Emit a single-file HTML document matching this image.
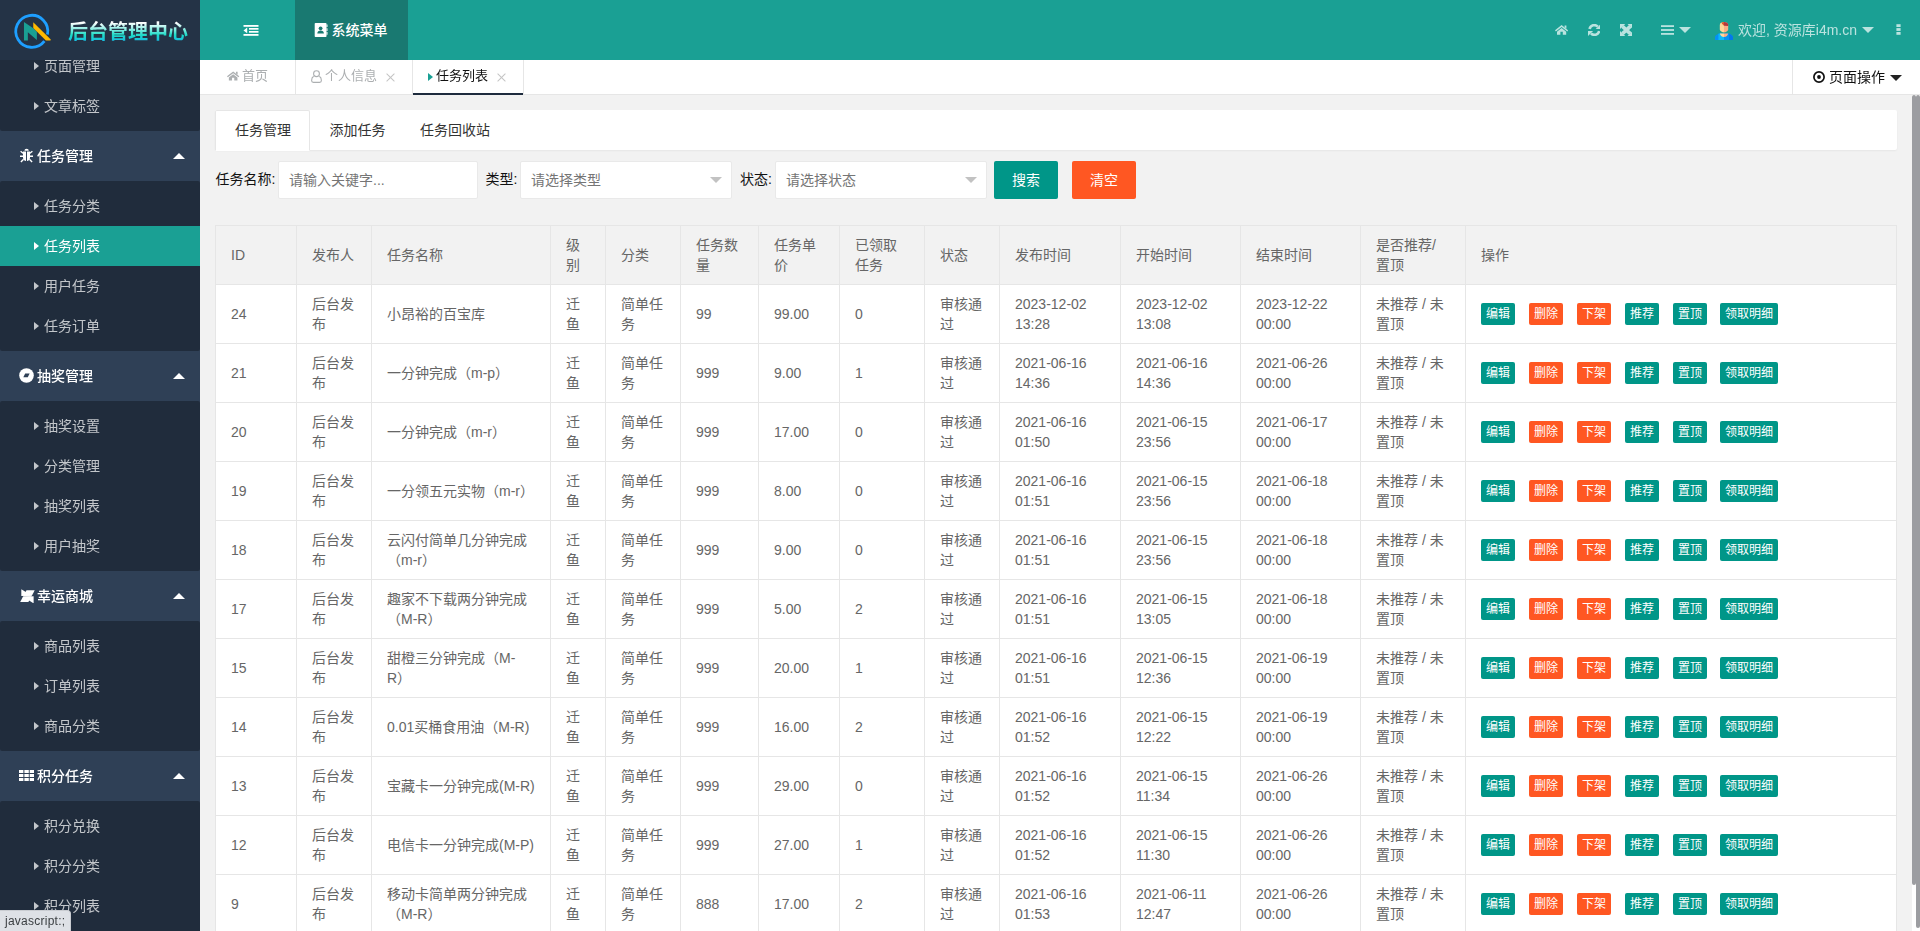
<!DOCTYPE html>
<html lang="zh-CN">
<head>
<meta charset="utf-8">
<title>后台管理中心</title>
<style>
*{box-sizing:border-box;margin:0;padding:0}
html,body{width:1920px;height:931px;overflow:hidden;background:#f2f2f2}
body{font-family:"Liberation Sans","Noto Sans CJK SC",sans-serif;font-size:14px;color:#333;position:relative;line-height:24px}
a{text-decoration:none;color:inherit}
ul{list-style:none}
svg{display:block}
.abs{position:absolute}

/* ---------- sidebar ---------- */
#side{will-change:transform;position:absolute;left:0;top:0;width:200px;height:931px;background:#2f4056;overflow:hidden}
#menu{position:absolute;left:0;top:46px;width:200px}
#menu .child{background:rgba(0,0,0,.3);padding:5px 0;border-radius:2px}
#menu .child li{height:40px;line-height:40px;color:rgba(255,255,255,.73);font-size:14px;position:relative;white-space:nowrap}
#menu .child li .tri{position:absolute;left:34.2px;top:15.7px;width:0;height:0;border-left:5.7px solid rgba(255,255,255,.73);border-top:4.25px solid transparent;border-bottom:4.25px solid transparent}
#menu .child li span.t{position:absolute;left:44px;top:0}
#menu .child li.this{background:#1aa094;color:#fff}
#menu .child li.this .tri{border-left-color:#fff}
#menu .parent{height:50px;line-height:50px;color:#fff;position:relative;font-size:14px;white-space:nowrap}
#menu .parent .t{position:absolute;left:37px;top:0;font-weight:500}
#menu .parent .ico{position:absolute;left:20px;top:18px;width:13px;height:14px}
#menu .parent .up{position:absolute;left:173px;top:22px;width:0;height:0;border-left:6px solid transparent;border-right:6px solid transparent;border-bottom:6px solid #fff}
#logo{position:absolute;left:0;top:0;width:200px;height:60px;background:#243346;z-index:5}
#logo h1{position:absolute;left:68px;top:20px;height:24px;line-height:24px;font-size:20px;font-weight:700;white-space:nowrap;background:linear-gradient(180deg,#ffffff 12%,#1edcc8 62%,#16b6e4 92%);-webkit-background-clip:text;background-clip:text;color:transparent}
#status{position:absolute;left:0;top:910px;width:71px;height:21px;background:#dee1e6;border-top-right-radius:4px;z-index:9;font-size:12px;line-height:21px;color:#3c4043;padding-left:5px;letter-spacing:.25px;border-top:1px solid #c9ccd1;border-right:1px solid #c9ccd1}

/* ---------- header ---------- */
#header{position:absolute;left:200px;top:0;width:1720px;height:60px;background:#1aa094}
#header .sysmenu{position:absolute;left:95px;top:0;width:113px;height:60px;background:#197971;color:#fff;line-height:60px;font-size:14px;white-space:nowrap}
#header .sysmenu span{position:absolute;left:36.4px;top:0;font-weight:500}
#header .r{will-change:transform;position:absolute;top:0;color:rgba(255,255,255,.7);line-height:60px;white-space:nowrap;font-size:14px}

/* ---------- tab bar ---------- */
#tabs{will-change:transform;position:absolute;left:200px;top:60px;width:1720px;height:35px;background:#fff;border-bottom:1px solid #e6e6e6}
#tabs .tab{position:absolute;top:0;height:34px;line-height:32px;font-size:13px;color:#acafb1;white-space:nowrap;border-right:1px solid #e6e6e6}
#tabs .x{position:absolute;top:13px;width:8px;height:8px}
#tabs .x:before,#tabs .x:after{content:"";position:absolute;left:-1.5px;top:3.5px;width:11px;height:1px;background:#c4c4c4;transform:rotate(45deg)}
#tabs .x:after{transform:rotate(-45deg)}

/* ---------- content ---------- */
#subtab{position:absolute;left:215px;top:110px;width:1682px;height:40px;background:#fff;border-radius:2px;box-shadow:0 1px 2px 0 rgba(0,0,0,.05)}
#subtab .li{position:absolute;top:0;height:40px;line-height:40px;font-size:14px;color:#333;white-space:nowrap}
#subtab .act{position:absolute;left:0;top:0;width:95px;height:41px;border:1px solid #e6e6e6;border-bottom-color:#fff;border-radius:2px 2px 0 0;background:#fff}
.lbl{position:absolute;top:161px;height:38px;line-height:36px;font-size:14px;color:#111;white-space:nowrap}
.inp{position:absolute;top:161px;height:38px;background:#fff;border:1px solid #e9e9e9;border-radius:2px;line-height:36px;font-size:14px;color:#757575;padding-left:10px;white-space:nowrap}
.inp .edge{position:absolute;right:8.8px;top:15px;width:0;height:0;border:6px solid transparent;border-top-color:#c2c2c2}
.btn{position:absolute;top:161px;height:38px;width:64px;line-height:38px;text-align:center;color:#fff;font-size:14px;border-radius:2px;white-space:nowrap}
.g{background:#009688}.o{background:#ff5722}

table{position:absolute;left:215px;top:225px;width:1681px;border-collapse:collapse;table-layout:fixed;background:#fff;color:#666;font-size:14px}
th,td{border:1px solid #e6e6e6;padding:9px 15px;line-height:20px;text-align:left;font-weight:400;vertical-align:middle;height:59px}
th{background:#f2f2f2}
td .b{display:inline-block;vertical-align:middle;height:22px;line-height:22px;padding:0 5px;font-size:12px;color:#fff;border-radius:2px;margin-right:14px;white-space:nowrap}
td.op{white-space:nowrap;font-size:0;padding-top:0;padding-bottom:0}

/* scrollbars */
.sb{position:absolute;top:95px;width:4px;background:#9c9da1;border-radius:2px}
</style>
</head>
<body>
<div id="side"><div id="menu">
<ul class="child" style="padding-top:0;border-radius:0 0 2px 2px"><li><i class="tri"></i><span class="t">页面管理</span></li><li><i class="tri"></i><span class="t">文章标签</span></li></ul>
<div class="parent"><svg class="ico" style="left:20px;top:17px;width:13px;height:15px" viewBox="0 0 13 15"><g fill="#fff"><path d="M4.400 2.800a2.200 2.100 0 0 1 4.400 0z"/><path d="M3 3.500h3V13C4.200 12.800 3 11.200 3 9.200z"/><path d="M7 3.500h3v5.700c0 2-1.200 3.600-3 3.800z"/></g><g stroke="#fff" stroke-width="1.400" fill="none"><path d="M0 8.300h3.200M9.800 8.300H13M.6 3.200l2.900 2.300M12.400 3.200L9.500 5.500M.9 14l2.700-2.800M12.100 14l-2.700-2.800"/></g></svg><span class="t">任务管理</span><i class="up"></i></div>
<ul class="child"><li><i class="tri"></i><span class="t">任务分类</span></li><li class="this"><i class="tri"></i><span class="t">任务列表</span></li><li><i class="tri"></i><span class="t">用户任务</span></li><li><i class="tri"></i><span class="t">任务订单</span></li></ul>
<div class="parent"><svg class="ico" style="left:19.100px;top:17.100px;width:15px;height:15px" viewBox="0 0 15 15"><circle cx="7.500" cy="7.500" r="7.300" fill="#fff"/><path d="M4.300 9.300L6.200 5.500h4.400L8.800 9.300z" fill="#2f4056"/></svg><span class="t">抽奖管理</span><i class="up"></i></div>
<ul class="child"><li><i class="tri"></i><span class="t">抽奖设置</span></li><li><i class="tri"></i><span class="t">分类管理</span></li><li><i class="tri"></i><span class="t">抽奖列表</span></li><li><i class="tri"></i><span class="t">用户抽奖</span></li></ul>
<div class="parent"><svg class="ico" style="left:19.500px;top:17.800px;width:15px;height:14.600px" viewBox="-0.5 -0.2 15 14.6"><g fill="#fff"><path d="M.8 0L11.500 6.500.8 6.900z"/><path d="M6 1h8.200L11.400 6.500 2.900 6.700z"/><path d="M-.3 12.800L2.500 7.400 11 7.100 7.900 12.800z"/><path d="M13.100 14.200L2.400 7.400 13.100 7z"/></g></svg><span class="t">幸运商城</span><i class="up"></i></div>
<ul class="child"><li><i class="tri"></i><span class="t">商品列表</span></li><li><i class="tri"></i><span class="t">订单列表</span></li><li><i class="tri"></i><span class="t">商品分类</span></li></ul>
<div class="parent"><svg class="ico" style="left:19.300px;top:19px;width:15.200px;height:11px" viewBox="0 0 15.200 11"><g fill="#fff"><rect x="0" y="0" width="4.400" height="3"/><rect x="5.400" y="0" width="4.400" height="3"/><rect x="10.700" y="0" width="4.400" height="3"/><rect x="0" y="4" width="4.400" height="3"/><rect x="5.400" y="4" width="4.400" height="3"/><rect x="10.700" y="4" width="4.400" height="3"/><rect x="0" y="8" width="4.400" height="3"/><rect x="5.400" y="8" width="4.400" height="3"/><rect x="10.700" y="8" width="4.400" height="3"/></g></svg><span class="t">积分任务</span><i class="up"></i></div>
<ul class="child"><li><i class="tri"></i><span class="t">积分兑换</span></li><li><i class="tri"></i><span class="t">积分分类</span></li><li><i class="tri"></i><span class="t">积分列表</span></li><li><i class="tri"></i><span class="t">积分订单</span></li></ul>
</div>
<div id="logo"><svg class="abs" style="left:0;top:0;width:60px;height:60px" viewBox="0 0 60 60"><path d="M44.41 41.15A16 16 0 1 1 47.48 34.49" fill="none" stroke="#1e9fff" stroke-width="2.8"/><path d="M23.98 21.92L33.26 28.36l3.61 3.35v8.25L27.85 32.23v8.24h-3.87z" fill="#1aa094"/><path d="M33.26 22.18L50.78 39.55l-.28 .92h-4.61L33.26 28.1z" fill="#ffb800"/></svg><h1>后台管理中心</h1></div>
<div id="status">javascript:;</div>
</div>
<div id="header">
<svg class="abs" style="left:43px;top:25px;width:16px;height:11px" viewBox="0 0 16 11"><g fill="#fff"><rect x="0.500" y="0" width="15" height="1.800"/><rect x="6" y="3" width="9.500" height="1.700"/><rect x="6" y="6" width="9.500" height="1.700"/><rect x="0.500" y="9" width="15" height="1.800"/><path d="M4.200 2.600v5.600L0.500 5.400z"/></g></svg>
<div class="sysmenu"><svg class="abs" style="left:19px;top:23px;width:14px;height:14px" viewBox="0 0 14 14"><path d="M1.500 0h10.200a.8.800 0 0 1 .8.800v12.400a.8.800 0 0 1-.8.800H1.500a.8.800 0 0 1-.8-.8V.8a.8.800 0 0 1 .8-.8z" fill="#fff"/><path d="M12.500 1.500h1v2.600h-1zM12.500 5.300h1v2.600h-1zM12.500 9.100h1v2.600h-1z" fill="#fff"/><circle cx="6.600" cy="5.300" r="1.900" fill="#197971"/><path d="M3.300 10.600c0-2 1.400-3 3.300-3s3.300 1 3.300 3z" fill="#197971"/></svg><span>系统菜单</span></div>
<svg class="abs" style="left:1354.800px;top:25px;width:13.200px;height:9.800px" viewBox="0 0 13.2 9.8"><g fill="#bae3df"><path d="M6.6 0L13.2 5.300l-.9 1.100L6.600 1.900.900 6.400 0 5.300z"/><path d="M9.600.500h1.800v3.200l-1.800-1.500z"/><path d="M6.600 3l4.600 3.700v3.100H7.800v-3H5.400v3H2V6.700z"/></g></svg>
<svg class="abs" style="left:1387.600px;top:24px;width:12.800px;height:12px" viewBox="0 0 12.8 12"><g fill="none" stroke="#bae3df" stroke-width="2.600"><path d="M1.600 5A4.800 4.800 0 0 1 9.800 2.700"/><path d="M11.200 7A4.800 4.800 0 0 1 3 9.300"/></g><g fill="#bae3df"><path d="M12.800 0.100v4.900H7.700z"/><path d="M0 11.900V7h5.100z"/></g></svg>
<svg class="abs" style="left:1419.500px;top:24px;width:12.800px;height:12px" viewBox="0 0 12.800 12"><g fill="#bae3df"><path d="M0 0h5.300L0 4.900zM12.800 0H7.500l5.300 4.900zM0 12h5.300L0 7.100zM12.800 12H7.500l5.300-4.900z"/></g><g stroke="#bae3df" stroke-width="3.600"><path d="M2.500 2.400l7.800 7.200M10.300 2.400L2.500 9.600"/></g></svg>
<svg class="abs" style="left:1461.400px;top:25px;width:13px;height:10px" viewBox="0 0 13 10"><g fill="#bae3df"><rect y="0.200" width="13" height="1.800"/><rect y="4.100" width="13" height="1.800"/><rect y="8" width="13" height="1.800"/></g></svg>
<i class="abs" style="left:1479px;top:27px;border:6px solid transparent;border-top-color:#bae3df;border-bottom:0"></i>
<svg class="abs" style="left:1515px;top:22px;width:18px;height:18px" viewBox="0 0 18 18"><path d="M0 18.200V15.200C.2 13.300 3 11.500 5 11.500H13c2 0 4.800 1.800 5 3.700v3z" fill="#0590f5"/><path d="M3.400 18.200V11.850Q4.200 11.500 5 11.500H9V18.200z" fill="#0ab9fb"/><path d="M9 18.200V11.500h4q.5 0 1.100 .150V18.200z" fill="#0592f0"/><path d="M14 18.200V11.650C15.800 12.200 17.900 13.600 18 15.200v3z" fill="#0478ea"/><path d="M4.900 11.500H9V15C6.800 15 4.900 13.300 4.900 11.500z" fill="#ffd699"/><path d="M13.100 11.500H9V15c2.200 0 4.100-1.700 4.100-3.500z" fill="#ffad85"/><path d="M9 0C6.800 0 4.800 .8 4.800 3V7.600c0 1.300 2.500 2.900 4.200 2.900z" fill="#ffd699"/><path d="M9 0c2.200 0 4.200 .8 4.200 3V7.600c0 1.300-2.500 2.900-4.200 2.900z" fill="#ffad85"/><path d="M6.600 .4Q7.700 0 9 0V3.800L7 1.700z" fill="#e0572a"/><path d="M9 0c2.200 0 4.200 .8 4.200 3V4L9 3.800z" fill="#b5373f"/></svg>
<div class="r" style="left:1537.500px">欢迎, 资源库i4m.cn</div>
<i class="abs" style="left:1662px;top:27px;border:6px solid transparent;border-top-color:#bae3df;border-bottom:0"></i>
<svg class="abs" style="left:1696px;top:24px;width:5px;height:11px" viewBox="0 0 5 11"><g fill="#bae3df"><rect x=".4" y="0.200" width="4.200" height="2.800"/><rect x=".4" y="4.100" width="4.200" height="2.800"/><rect x=".4" y="8" width="4.200" height="2.800"/></g></svg>
</div>
<div id="tabs">
<div class="tab" style="left:0;width:96px"><svg class="abs" style="left:27.400px;top:11.300px;width:12.300px;height:9.900px" viewBox="0 0 13.2 9.8"><g fill="#acafb1"><path d="M6.6 0L13.2 5.300l-.9 1.100L6.600 1.900.900 6.400 0 5.300z"/><path d="M9.600.500h1.800v3.200l-1.800-1.500z"/><path d="M6.600 3l4.600 3.700v3.100H7.800v-3H5.400v3H2V6.700z"/></g></svg><span class="abs" style="left:42px;top:0">首页</span></div>
<div class="tab" style="left:96px;width:117px"><svg class="abs" style="left:15px;top:10px;width:11px;height:13px" viewBox="0 0 11 13"><g fill="none" stroke="#acafb1" stroke-width="1.100"><circle cx="5.500" cy="3.700" r="2.900"/><path d="M2.700 6.300C1.300 7 .6 8.500.6 10.500c0 1.200.7 1.900 1.800 1.900h6.200c1.100 0 1.800-.7 1.800-1.900 0-2-.7-3.500-2.100-4.200"/></g></svg><span class="abs" style="left:29px;top:0">个人信息</span><i class="x" style="left:90px"></i></div>
<div class="tab" style="left:213px;width:110px;color:#111;border-right:0"><i class="abs" style="left:15px;top:12.500px;border-left:5px solid #1aa094;border-top:4px solid transparent;border-bottom:4px solid transparent"></i><span class="abs" style="left:23px;top:0">任务列表</span><i class="x" style="left:84.500px"></i></div>
<div class="abs" style="left:323px;top:0;width:1px;height:34px;background:#e6e6e6"></div>
<div class="abs" style="left:213px;top:33px;width:110px;height:2px;background:#1e2b3d"></div>
<div class="abs" style="left:1592px;top:0;width:1px;height:34px;background:#e6e6e6"></div>
<svg class="abs" style="left:1613px;top:11px;width:12px;height:12px" viewBox="0 0 12 12"><circle cx="6" cy="6" r="5.100" fill="none" stroke="#111" stroke-width="1.700"/><circle cx="6" cy="6" r="1.900" fill="#111"/></svg>
<span class="abs" style="left:1629px;top:0;line-height:34px;font-size:14px;color:#111;white-space:nowrap">页面操作</span>
<i class="abs" style="left:1690px;top:15px;border:6px solid transparent;border-top-color:#222;border-bottom:0"></i>
</div>
<div id="subtab"><div class="act"></div><span class="li" style="left:20px">任务管理</span><span class="li" style="left:114.500px">添加任务</span><span class="li" style="left:205px">任务回收站</span></div>
<span class="lbl" style="left:215.500px">任务名称:</span><div class="inp" style="left:278px;width:199.500px">请输入关键字...</div>
<span class="lbl" style="left:485.500px">类型:</span><div class="inp" style="left:520px;width:212px">请选择类型<i class="edge"></i></div>
<span class="lbl" style="left:740px">状态:</span><div class="inp" style="left:775px;width:212px">请选择状态<i class="edge"></i></div>
<div class="btn g" style="left:994px">搜索</div><div class="btn o" style="left:1072px">清空</div>
<table><colgroup><col style="width:81px"><col style="width:75px"><col style="width:179px"><col style="width:55px"><col style="width:75px"><col style="width:78px"><col style="width:81px"><col style="width:85px"><col style="width:75px"><col style="width:121px"><col style="width:120px"><col style="width:120px"><col style="width:105px"><col style="width:431px"></colgroup>
<thead><tr><th>ID</th><th>发布人</th><th>任务名称</th><th>级别</th><th>分类</th><th>任务数量</th><th>任务单价</th><th>已领取任务</th><th>状态</th><th>发布时间</th><th>开始时间</th><th>结束时间</th><th>是否推荐/<br>置顶</th><th>操作</th></tr></thead><tbody>
<tr><td>24</td><td>后台发布</td><td>小昂裕的百宝库</td><td>迁鱼</td><td>简单任务</td><td>99</td><td>99.00</td><td>0</td><td>审核通过</td><td>2023-12-02<br>13:28</td><td>2023-12-02<br>13:08</td><td>2023-12-22<br>00:00</td><td>未推荐 / 未置顶</td><td class="op"><span class="b g">编辑</span><span class="b o">删除</span><span class="b o">下架</span><span class="b g">推荐</span><span class="b g">置顶</span><span class="b g" style="margin-right:0;margin-left:-1px">领取明细</span></td></tr>
<tr><td>21</td><td>后台发布</td><td>一分钟完成（m-p）</td><td>迁鱼</td><td>简单任务</td><td>999</td><td>9.00</td><td>1</td><td>审核通过</td><td>2021-06-16<br>14:36</td><td>2021-06-16<br>14:36</td><td>2021-06-26<br>00:00</td><td>未推荐 / 未置顶</td><td class="op"><span class="b g">编辑</span><span class="b o">删除</span><span class="b o">下架</span><span class="b g">推荐</span><span class="b g">置顶</span><span class="b g" style="margin-right:0;margin-left:-1px">领取明细</span></td></tr>
<tr><td>20</td><td>后台发布</td><td>一分钟完成（m-r）</td><td>迁鱼</td><td>简单任务</td><td>999</td><td>17.00</td><td>0</td><td>审核通过</td><td>2021-06-16<br>01:50</td><td>2021-06-15<br>23:56</td><td>2021-06-17<br>00:00</td><td>未推荐 / 未置顶</td><td class="op"><span class="b g">编辑</span><span class="b o">删除</span><span class="b o">下架</span><span class="b g">推荐</span><span class="b g">置顶</span><span class="b g" style="margin-right:0;margin-left:-1px">领取明细</span></td></tr>
<tr><td>19</td><td>后台发布</td><td>一分领五元实物（m-r）</td><td>迁鱼</td><td>简单任务</td><td>999</td><td>8.00</td><td>0</td><td>审核通过</td><td>2021-06-16<br>01:51</td><td>2021-06-15<br>23:56</td><td>2021-06-18<br>00:00</td><td>未推荐 / 未置顶</td><td class="op"><span class="b g">编辑</span><span class="b o">删除</span><span class="b o">下架</span><span class="b g">推荐</span><span class="b g">置顶</span><span class="b g" style="margin-right:0;margin-left:-1px">领取明细</span></td></tr>
<tr><td>18</td><td>后台发布</td><td>云闪付简单几分钟完成（m-r）</td><td>迁鱼</td><td>简单任务</td><td>999</td><td>9.00</td><td>0</td><td>审核通过</td><td>2021-06-16<br>01:51</td><td>2021-06-15<br>23:56</td><td>2021-06-18<br>00:00</td><td>未推荐 / 未置顶</td><td class="op"><span class="b g">编辑</span><span class="b o">删除</span><span class="b o">下架</span><span class="b g">推荐</span><span class="b g">置顶</span><span class="b g" style="margin-right:0;margin-left:-1px">领取明细</span></td></tr>
<tr><td>17</td><td>后台发布</td><td>趣家不下载两分钟完成（M-R）</td><td>迁鱼</td><td>简单任务</td><td>999</td><td>5.00</td><td>2</td><td>审核通过</td><td>2021-06-16<br>01:51</td><td>2021-06-15<br>13:05</td><td>2021-06-18<br>00:00</td><td>未推荐 / 未置顶</td><td class="op"><span class="b g">编辑</span><span class="b o">删除</span><span class="b o">下架</span><span class="b g">推荐</span><span class="b g">置顶</span><span class="b g" style="margin-right:0;margin-left:-1px">领取明细</span></td></tr>
<tr><td>15</td><td>后台发布</td><td>甜橙三分钟完成（M-<br>R）</td><td>迁鱼</td><td>简单任务</td><td>999</td><td>20.00</td><td>1</td><td>审核通过</td><td>2021-06-16<br>01:51</td><td>2021-06-15<br>12:36</td><td>2021-06-19<br>00:00</td><td>未推荐 / 未置顶</td><td class="op"><span class="b g">编辑</span><span class="b o">删除</span><span class="b o">下架</span><span class="b g">推荐</span><span class="b g">置顶</span><span class="b g" style="margin-right:0;margin-left:-1px">领取明细</span></td></tr>
<tr><td>14</td><td>后台发布</td><td>0.01买桶食用油（M-R)</td><td>迁鱼</td><td>简单任务</td><td>999</td><td>16.00</td><td>2</td><td>审核通过</td><td>2021-06-16<br>01:52</td><td>2021-06-15<br>12:22</td><td>2021-06-19<br>00:00</td><td>未推荐 / 未置顶</td><td class="op"><span class="b g">编辑</span><span class="b o">删除</span><span class="b o">下架</span><span class="b g">推荐</span><span class="b g">置顶</span><span class="b g" style="margin-right:0;margin-left:-1px">领取明细</span></td></tr>
<tr><td>13</td><td>后台发布</td><td>宝藏卡一分钟完成(M-R)</td><td>迁鱼</td><td>简单任务</td><td>999</td><td>29.00</td><td>0</td><td>审核通过</td><td>2021-06-16<br>01:52</td><td>2021-06-15<br>11:34</td><td>2021-06-26<br>00:00</td><td>未推荐 / 未置顶</td><td class="op"><span class="b g">编辑</span><span class="b o">删除</span><span class="b o">下架</span><span class="b g">推荐</span><span class="b g">置顶</span><span class="b g" style="margin-right:0;margin-left:-1px">领取明细</span></td></tr>
<tr><td>12</td><td>后台发布</td><td>电信卡一分钟完成(M-P)</td><td>迁鱼</td><td>简单任务</td><td>999</td><td>27.00</td><td>1</td><td>审核通过</td><td>2021-06-16<br>01:52</td><td>2021-06-15<br>11:30</td><td>2021-06-26<br>00:00</td><td>未推荐 / 未置顶</td><td class="op"><span class="b g">编辑</span><span class="b o">删除</span><span class="b o">下架</span><span class="b g">推荐</span><span class="b g">置顶</span><span class="b g" style="margin-right:0;margin-left:-1px">领取明细</span></td></tr>
<tr><td>9</td><td>后台发布</td><td>移动卡简单两分钟完成（M-R）</td><td>迁鱼</td><td>简单任务</td><td>888</td><td>17.00</td><td>2</td><td>审核通过</td><td>2021-06-16<br>01:53</td><td>2021-06-11<br>12:47</td><td>2021-06-26<br>00:00</td><td>未推荐 / 未置顶</td><td class="op"><span class="b g">编辑</span><span class="b o">删除</span><span class="b o">下架</span><span class="b g">推荐</span><span class="b g">置顶</span><span class="b g" style="margin-right:0;margin-left:-1px">领取明细</span></td></tr>
</tbody></table>
<div class="abs" style="left:1912px;top:95px;width:8px;height:836px;background:#fff"></div><div class="sb" style="left:1912px;height:790px"></div><div class="sb" style="left:1916px;height:833px"></div>
</body></html>
